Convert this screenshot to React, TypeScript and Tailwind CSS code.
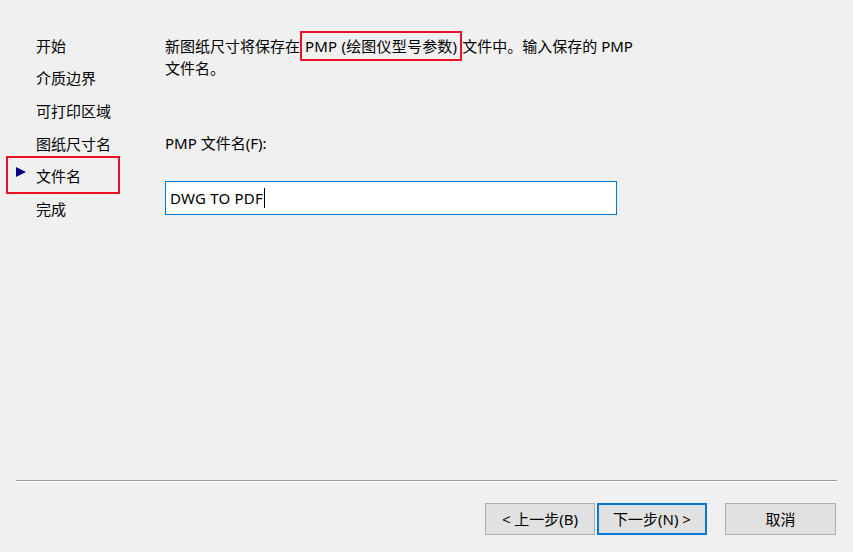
const STEPS = ['开始', '介质边界', '可打印区域', '图纸尺寸名', '文件名', '完成'];
const CURRENT = 4;

export default function App() {
  return (
    <div className="w-[853px] h-[552px] bg-[#f0f0f0] text-black text-[15px] font-['Noto_Sans','Noto_Sans_CJK_SC',sans-serif] flex flex-col overflow-hidden">
      <div className="h-[480px] flex">
        {/* wizard steps */}
        <div className="w-[165px] pt-[30px] flex flex-col">
          {STEPS.map((s, i) => (
            <div key={s} className="relative h-[32.6px] flex items-center pl-[36px] leading-none">
              {i === CURRENT && (
                <>
                  <svg className="absolute left-[16px] top-[6.6px]" width="10" height="10" viewBox="0 0 10 10">
                    <path d="M0 0 L10 5 L0 10 Z" fill="#000080" />
                  </svg>
                  <div className="absolute left-[6px] top-[-4.4px] w-[114px] h-[38px] border-2 border-[#e81123]" />
                </>
              )}
              {s}
            </div>
          ))}
        </div>

        {/* page body */}
        <div className="flex flex-col">
          <p className="mt-[35px] w-[480px] leading-[22px]">
            新图纸尺寸将保存在
            <span className="relative ml-[5px] mr-[5px] tracking-[0.2px]">
              PMP (绘图仪型号参数)
              <span className="absolute left-[-5px] right-[-5px] top-[-5px] bottom-[-5px] border-2 border-[#e81123]" />
            </span>
            文件中。输入保存的 PMP
            <br />
            文件名。
          </p>
          <label className="mt-[53px] leading-[22px]">PMP 文件名(F):</label>
          <div className="mt-[27px] w-[452px] h-[34px] bg-white border border-[#0078d7] flex items-center pl-[4px]">
            <span className="tracking-[0.2px]">DWG TO PDF</span>
            <span className="w-px h-[20px] bg-black ml-px" />
          </div>
        </div>
      </div>

      <div className="mx-[16px] h-[2px] border-t border-[#a0a0a0] border-b border-b-white" />

      <div className="mt-[21px] flex justify-end pr-[17px] text-[15px]">
        <button className="w-[110px] h-[32px] bg-[#e1e1e1] border border-[#adadad]">&lt; 上一步(B)</button>
        <button className="ml-[2px] w-[110px] h-[32px] bg-[#e1e1e1] border-2 border-[#0078d7]">下一步(N) &gt;</button>
        <button className="ml-[18px] w-[111px] h-[32px] bg-[#e1e1e1] border border-[#adadad]">取消</button>
      </div>
    </div>
  );
}
